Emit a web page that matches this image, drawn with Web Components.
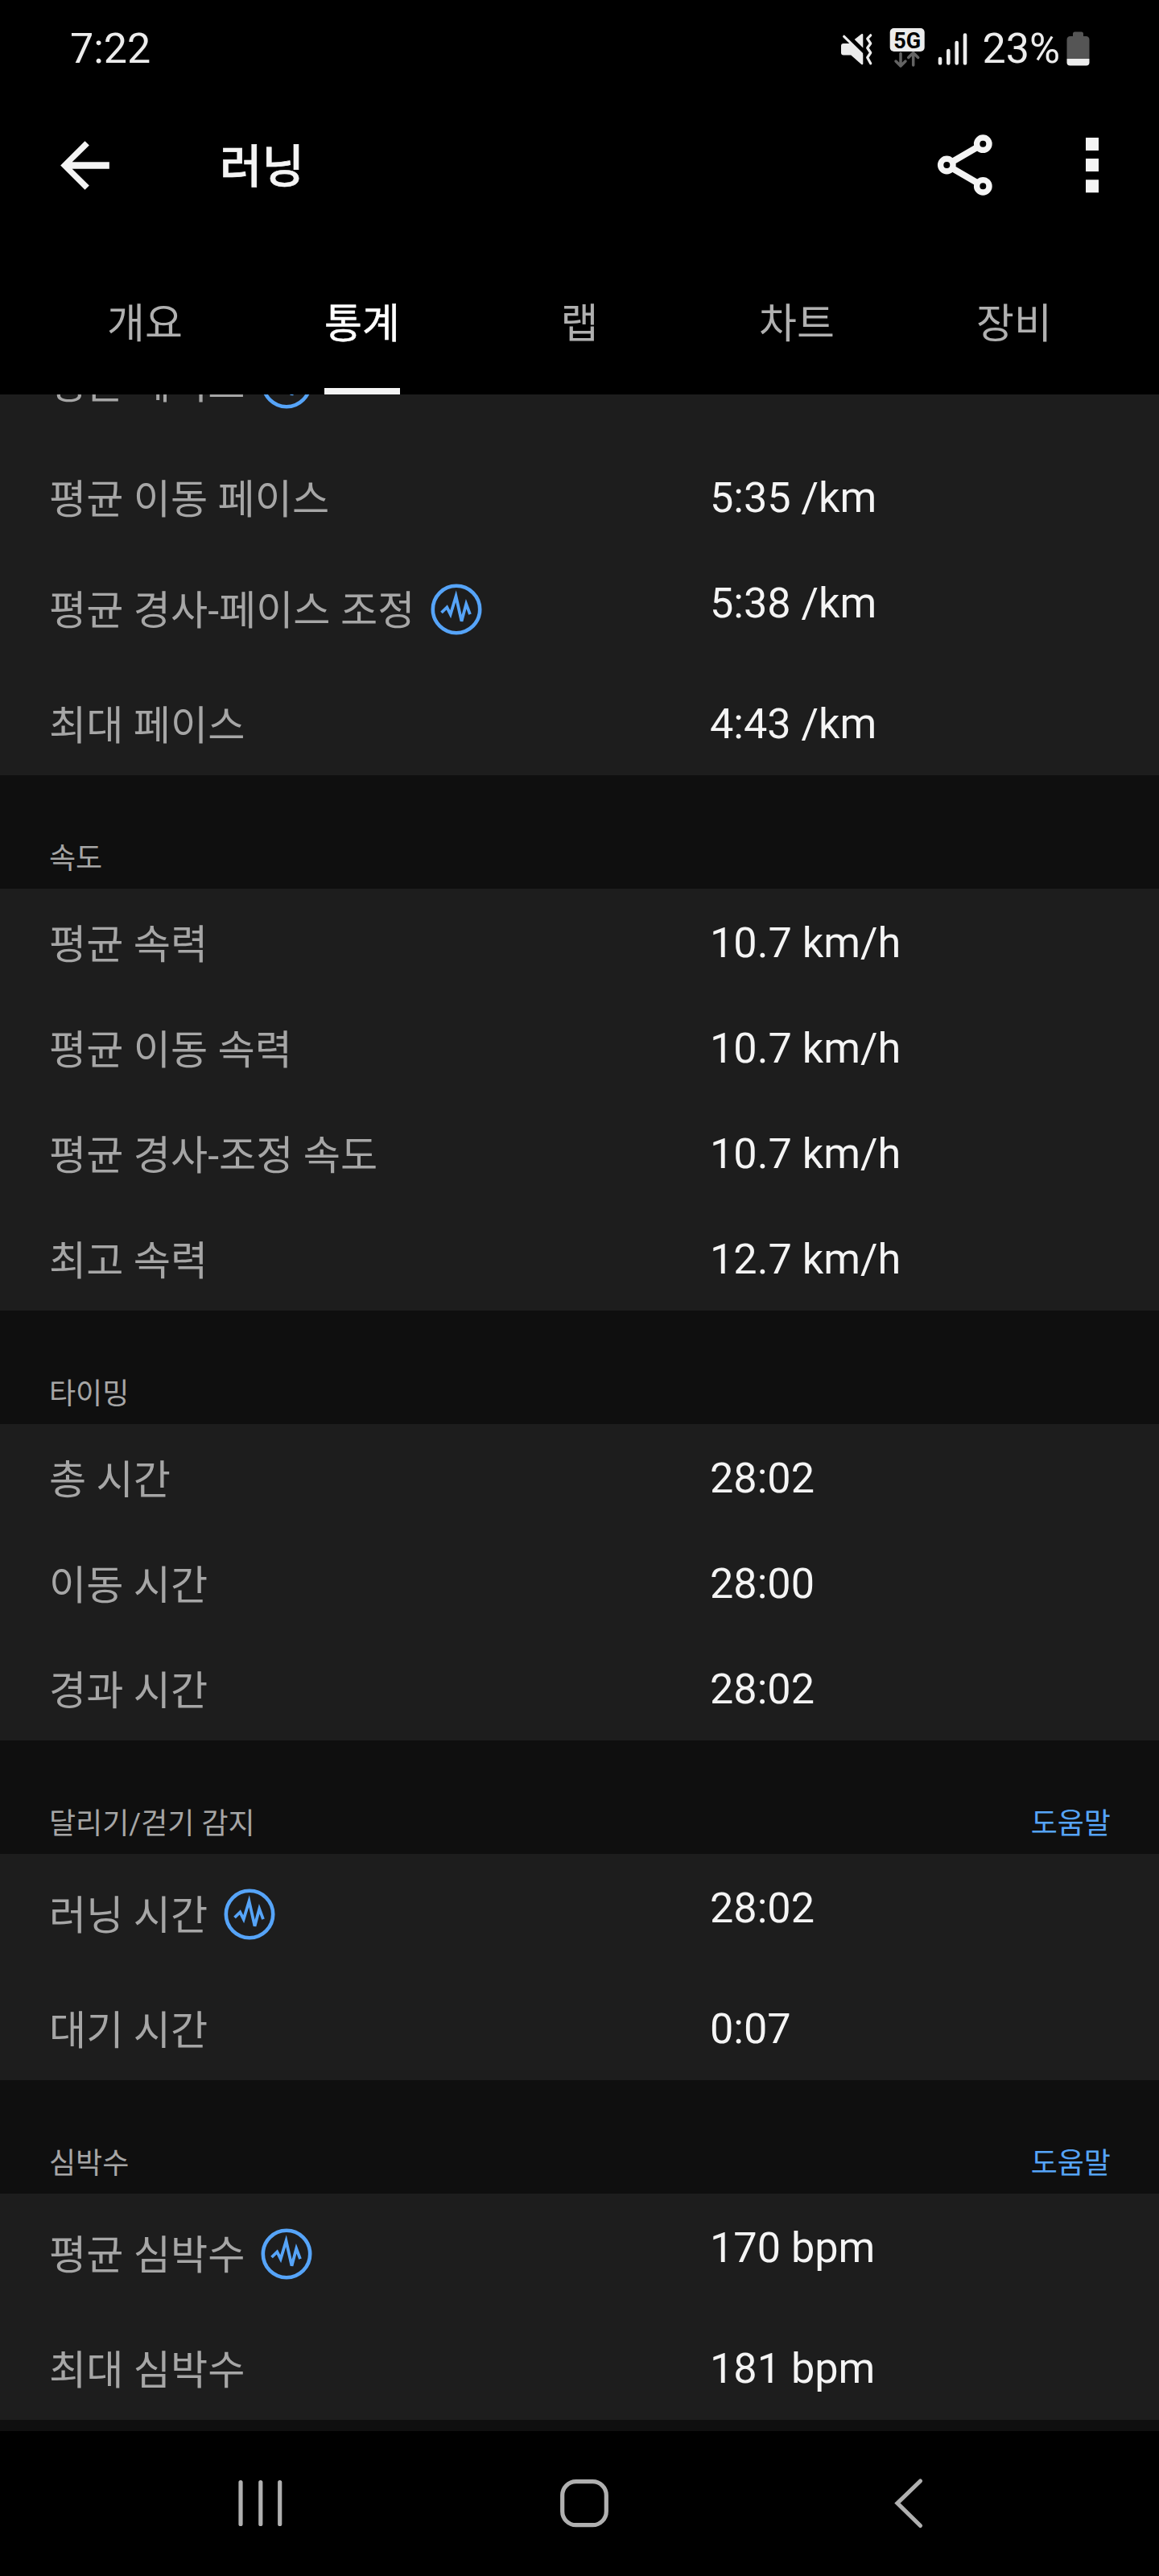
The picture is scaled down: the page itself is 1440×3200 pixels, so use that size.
<!doctype html>
<html lang="ko">
<head>
    <meta charset="utf-8">
    <title>러닝</title>

    <style type="text/css">
        body {
            margin: 0;
            background: #000;
            font-family: Roboto, "Noto Sans CJK KR", sans-serif;
        }
    </style>
</head>
<body>
    <activity-screen>
        <status-bar slot="top" time="7:22" battery="23%"></status-bar>
        <app-bar slot="top">러닝</app-bar>
        <tab-bar slot="top">
            <tab-item>개요</tab-item>
            <tab-item active>통계</tab-item>
            <tab-item>랩</tab-item>
            <tab-item>차트</tab-item>
            <tab-item>장비</tab-item>
        </tab-bar>

        <stat-section>
            <stat-row value="" badge>평균 페이스</stat-row>
            <stat-row value="5:35 /km">평균 이동 페이스</stat-row>
            <stat-row value="5:38 /km" badge>평균 경사-페이스 조정</stat-row>
            <stat-row value="4:43 /km">최대 페이스</stat-row>
        </stat-section>
        <stat-section heading="속도">
            <stat-row value="10.7 km/h">평균 속력</stat-row>
            <stat-row value="10.7 km/h">평균 이동 속력</stat-row>
            <stat-row value="10.7 km/h">평균 경사-조정 속도</stat-row>
            <stat-row value="12.7 km/h">최고 속력</stat-row>
        </stat-section>
        <stat-section heading="타이밍">
            <stat-row value="28:02">총 시간</stat-row>
            <stat-row value="28:00">이동 시간</stat-row>
            <stat-row value="28:02">경과 시간</stat-row>
        </stat-section>
        <stat-section heading="달리기/걷기 감지" help="도움말">
            <stat-row value="28:02" badge>러닝 시간</stat-row>
            <stat-row value="0:07">대기 시간</stat-row>
        </stat-section>
        <stat-section heading="심박수" help="도움말">
            <stat-row value="170 bpm" badge>평균 심박수</stat-row>
            <stat-row value="181 bpm">최대 심박수</stat-row>
        </stat-section>

        <nav-bar slot="bottom"></nav-bar>
    </activity-screen>
</body>
<script>
    (function(window, document, undefined) {

        // Shared base: puts the markup of a subclass into an open shadow root.
        class BaseElement extends HTMLElement {
            connectedCallback() {
                var shadowRoot = this.attachShadow({mode:'open'});
                var template = document.createElement('template');
                template.innerHTML = this.render();
                shadowRoot.appendChild(template.content.cloneNode(true));
            }
        }

        class ActivityScreen extends BaseElement {
            render() {
                return `
                    <style>
                        :host {
                            display: flex;
                            flex-direction: column;
                            width: 1440px;
                            height: 3200px;
                            overflow: hidden;
                        }
                        header, footer {
                            flex: none;
                            background: #000;
                        }
                        /* the list is scrolled to its end, so it overflows at the top */
                        main {
                            flex: 1;
                            min-height: 0;
                            overflow: hidden;
                            display: flex;
                            flex-direction: column;
                            justify-content: flex-end;
                            background: #0f0f0f;
                            padding-bottom: 14px;
                        }
                    </style>
                    <header><slot name="top"></slot></header>
                    <main><slot></slot></main>
                    <footer><slot name="bottom"></slot></footer>
                `;
            }
        }

        class StatusBar extends BaseElement {
            render() {
                return `
                    <style>
                        :host {
                            display: flex;
                            justify-content: space-between;
                            height: 120px;
                            padding: 0 86px 0 87px;
                            color: #ececec;
                            font-size: 52px;
                            line-height: 122px;
                        }
                        .icons {
                            display: flex;
                        }
                        .icons span {
                            margin: 0 8px 0 18px;
                        }
                        svg {
                            display: block;
                            height: 120px;
                        }
                    </style>
                    <span>${this.getAttribute('time')}</span>
                    <div class="icons">
                        <svg width="162" height="120" viewBox="1040 0 162 120">
                            <!-- muted speaker with vibration lines -->
                            <path fill="#ececec" d="M1048 54h9l15.300 14v11q0 2-2 1l-13-11.500h-9.300q-3 0-3-3v-8.500q0-3 3-3zM1061.700 49l8.600-6.700q2-1 2 1v16.200z"/>
                            <path stroke="#ececec" stroke-width="3.200" stroke-linecap="round" d="M1048.700 45.300l22 21.500"/>
                            <path fill="none" stroke="#ececec" stroke-width="3.200" stroke-linecap="round" stroke-linejoin="round" d="M1081.700 43.800l-4 4.200 4 6-4 5.500 4 6-4 6 4 7.300"/>
                            <rect x="1105.700" y="35" width="43" height="29" rx="5" fill="#ececec"/>
                            <text x="1127.200" y="59.500" font-size="27" font-weight="700" text-anchor="middle" fill="#000">5G</text>
                            <path fill="none" stroke="#636363" stroke-width="3.500" stroke-linecap="round" stroke-linejoin="round" d="M1119 66.500V81M1113 76l6 6 6-6M1134.700 81V66.500M1128.700 71.500l6-6 6 6"/>
                            <path stroke="#ececec" stroke-width="4.600" stroke-linecap="round" d="M1168 73v5.500M1178.300 63v15.500M1188.700 53v25.500M1199 43.500v35"/>
                        </svg>
                        <span>${this.getAttribute('battery')}</span>
                        <svg width="29" height="120" viewBox="0 0 29 120">
                            <path fill="#555" d="M8 45v-3q0-2.500 2.500-2.500h8q2.500 0 2.500 2.500v3h3q4.500 0 4.500 4.500v23.500h-28v-23.500q0-4.500 4.500-4.500z"/>
                            <path fill="#ececec" d="M.5 73h28v4.500q0 4-4 4h-20q-4 0-4-4z"/>
                        </svg>
                    </div>
                `;
            }
        }

        class AppBar extends BaseElement {
            render() {
                return `
                    <style>
                        :host {
                            display: flex;
                            align-items: center;
                            height: 170px;
                            padding: 0 67px 0 60px;
                            color: #f4f4f4;
                        }
                        h1 {
                            flex: 1;
                            margin: 0 0 0 122px;
                            padding-top: 5px;
                            font-size: 57px;
                            font-weight: 500;
                            line-height: 165px;
                            -webkit-text-stroke: .6px currentColor;
                        }
                        svg {
                            display: block;
                            fill: currentColor;
                        }
                        .share {
                            margin-right: 108px;
                            fill: none;
                            stroke: currentColor;
                        }
                    </style>
                    <svg width="91" height="91" viewBox="0 0 24 24">
                        <path d="M20 10.900H7.830l5.590-5.490L12 4l-8 8 8 8 1.410-1.410L7.830 13.100H20z"/>
                    </svg>
                    <h1><slot></slot></h1>
                    <svg class="share" width="76" height="80" viewBox="1161 165 76 80">
                        <circle cx="1221.300" cy="178.700" r="7.700" stroke-width="7.400"/>
                        <circle cx="1176.300" cy="205" r="7.700" stroke-width="7.400"/>
                        <circle cx="1221.300" cy="231.300" r="7.700" stroke-width="7.400"/>
                        <path stroke-width="8" d="M1183 201l31-18M1183 209l31 18"/>
                    </svg>
                    <svg width="28" height="80" viewBox="1345 165 28 80">
                        <path d="M1349 171h16v16h-16zM1349 197h16v16h-16zM1349 223.300h16v16h-16z"/>
                    </svg>
                `;
            }
        }

        class TabBar extends BaseElement {
            render() {
                return `
                    <style>
                        :host {
                            display: grid;
                            grid-template-columns: repeat(5, 1fr);
                            justify-items: center;
                            height: 200px;
                            padding: 0 45px;
                        }
                    </style>
                    <slot></slot>
                `;
            }
        }

        class TabItem extends BaseElement {
            render() {
                return `
                    <style>
                        :host {
                            box-sizing: border-box;
                            height: 200px;
                            padding-top: 63px;
                            color: #b0b0b0;
                            font-size: 51px;
                            line-height: 100px;
                        }
                        :host([active]) {
                            border-bottom: 8px solid #f4f4f4;
                            color: #fff;
                            -webkit-text-stroke: .5px #fff;
                        }
                    </style>
                    <slot></slot>
                `;
            }
        }

        class StatSection extends BaseElement {
            render() {
                var heading = this.getAttribute('heading');
                var help = this.getAttribute('help');

                return `
                    <style>
                        :host {
                            display: block;
                            flex: none;
                        }
                        .heading {
                            box-sizing: border-box;
                            display: flex;
                            justify-content: space-between;
                            height: 141px;
                            padding: 74px 60px 0 61px;
                            background: #0f0f0f;
                            color: #a6a6a6;
                            font-size: 36px;
                            line-height: 60px;
                        }
                        .help {
                            color: #56a4f8;
                        }
                        .rows {
                            background: #1d1d1d;
                        }
                    </style>
                    ${heading ? `<div class="heading"><span>${heading}</span>${help ? `<span class="help">${help}</span>` : ''}</div>` : ''}
                    <div class="rows"><slot></slot></div>
                `;
            }
        }

        class StatRow extends BaseElement {
            render() {
                return `
                    <style>
                        :host {
                            display: grid;
                            grid-template-columns: 821px 1fr;
                            height: 131px;
                            padding-left: 61px;
                        }
                        :host([badge]) {
                            height: 150px;
                        }
                        .label {
                            display: flex;
                            align-items: center;
                            gap: 20px;
                            color: #a6a6a6;
                            font-size: 50.200px;
                            line-height: 76px;
                        }
                        .label span {
                            padding-top: 4px;
                        }
                        .value {
                            color: #f4f4f4;
                            font-size: 52.200px;
                            line-height: 135px;
                        }
                    </style>
                    <div class="label">
                        <span><slot></slot></span>
                        ${this.hasAttribute('badge') ? '<metric-badge></metric-badge>' : ''}
                    </div>
                    <div class="value">${this.getAttribute('value')}</div>
                `;
            }
        }

        class MetricBadge extends BaseElement {
            render() {
                return `
                    <style>
                        :host {
                            display: block;
                            width: 64px;
                            height: 64px;
                        }
                        svg {
                            display: block;
                        }
                    </style>
                    <svg width="64" height="64" viewBox="-32 -32 64 64" fill="none" stroke="#56a4f8">
                        <circle r="29.200" stroke-width="4.600"/>
                        <path stroke-width="3.800" d="M-18.500 4l6.800-6.500 4.400 8.700 6.800-22.500 7 31 5.700-21.500 4.800 13"/>
                    </svg>
                `;
            }
        }

        class NavBar extends BaseElement {
            render() {
                return `
                    <style>
                        :host {
                            display: flex;
                            align-items: center;
                            justify-content: space-between;
                            box-sizing: border-box;
                            height: 180px;
                            padding: 0 290px;
                        }
                        svg {
                            display: block;
                            fill: none;
                            stroke: #b0b0b0;
                            stroke-width: 5.200;
                            stroke-linecap: round;
                        }
                    </style>
                    <svg width="66" height="66" viewBox="290 3077 66 66">
                        <path d="M299 3083.500v52M323.800 3083.500v52M347.700 3083.500v52"/>
                    </svg>
                    <svg width="76" height="66" viewBox="682 3077 76 66">
                        <rect x="698.700" y="3082.700" width="54.600" height="54" rx="17"/>
                    </svg>
                    <svg width="66" height="66" viewBox="1084 3077 66 66">
                        <path d="M1143.500 3082l-28.500 27.500 28.500 28"/>
                    </svg>
                `;
            }
        }

        window.customElements.define('activity-screen', ActivityScreen);
        window.customElements.define('status-bar', StatusBar);
        window.customElements.define('app-bar', AppBar);
        window.customElements.define('tab-bar', TabBar);
        window.customElements.define('tab-item', TabItem);
        window.customElements.define('stat-section', StatSection);
        window.customElements.define('stat-row', StatRow);
        window.customElements.define('metric-badge', MetricBadge);
        window.customElements.define('nav-bar', NavBar);
    })(window, document);
</script>
</html>
